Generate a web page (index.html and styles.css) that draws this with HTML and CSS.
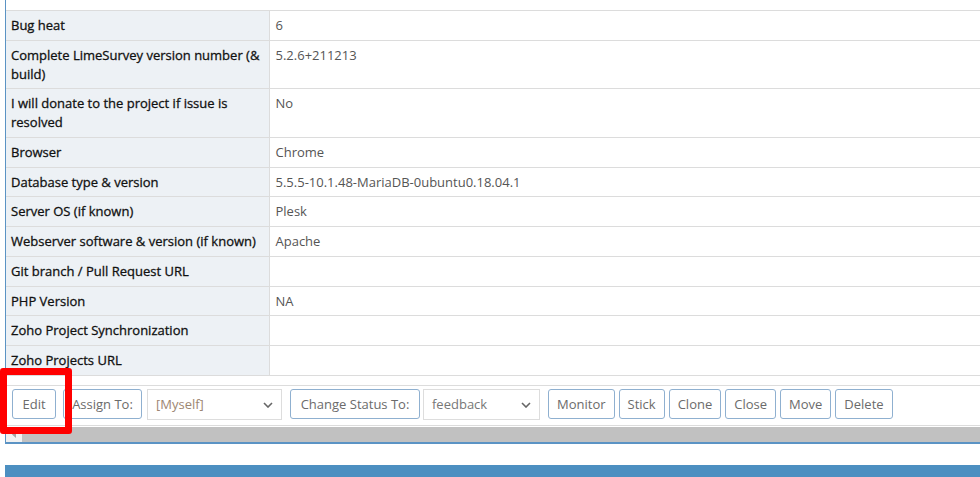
FILE: index.html
```html
<!DOCTYPE html>
<html>
<head>
    <title>Issue details</title>
    <link rel="stylesheet" href="styles.css">
</head>
<body>
    <div class="issue-box">
        <div class="top-gap"></div>
        <table class="details">
            <colgroup><col class="label-col"><col></colgroup>
            <tr><th>Bug heat</th><td>6</td></tr>
            <tr><th>Complete LimeSurvey version number (&amp; build)</th><td>5.2.6+211213</td></tr>
            <tr><th>I will donate to the project if issue is resolved</th><td>No</td></tr>
            <tr><th>Browser</th><td>Chrome</td></tr>
            <tr><th>Database type &amp; version</th><td>5.5.5-10.1.48-MariaDB-0ubuntu0.18.04.1</td></tr>
            <tr><th>Server OS (if known)</th><td>Plesk</td></tr>
            <tr><th>Webserver software &amp; version (if known)</th><td>Apache</td></tr>
            <tr><th>Git branch / Pull Request URL</th><td></td></tr>
            <tr><th>PHP Version</th><td>NA</td></tr>
            <tr><th>Zoho Project Synchronization</th><td></td></tr>
            <tr><th>Zoho Projects URL</th><td></td></tr>
        </table>
        <div class="spacer-row"></div>
        <div class="actions">
            <button class="btn edit-btn">Edit</button>
            <button class="btn assign-btn">Assign To:</button>
            <div class="fake-select myself">[Myself]<svg width="10" height="6" viewBox="0 0 10 6"><path d="M1 1l4 4 4-4" fill="none" stroke="#666" stroke-width="1.6"/></svg></div>
            <button class="btn status-btn">Change Status To:</button>
            <div class="fake-select status">feedback<svg width="10" height="6" viewBox="0 0 10 6"><path d="M1 1l4 4 4-4" fill="none" stroke="#666" stroke-width="1.6"/></svg></div>
            <button class="btn">Monitor</button>
            <button class="btn">Stick</button>
            <button class="btn">Clone</button>
            <button class="btn">Close</button>
            <button class="btn">Move</button>
            <button class="btn">Delete</button>
        </div>
        <div class="hscroll">
            <div class="hscroll-arrow"><svg width="5" height="7" viewBox="0 0 5 7"><path d="M4 0v7L0 3.5z" fill="#a3a3a3"/></svg></div>
            <div class="hscroll-thumb"></div>
        </div>
        <div class="highlight"></div>
    </div>

    <div class="section-bar">Issue History</div>
</body>
</html>
```

FILE: styles.css
```css
body {
    font-family: "Open Sans", "Liberation Sans", sans-serif;
    font-size: 13px;
    margin: 0;
    padding: 0;
    background-color: white;
    overflow: hidden;
}
.issue-box {
    position: relative;
    margin-left: 5px;
    border-left: 1px solid #5b93c4;
    border-bottom: 2px solid #5b93c4;
}
.top-gap {
    height: 10px;
    border-bottom: 1px solid #dcdcdc;
}
.details {
    width: 100%;
    border-collapse: collapse;
    table-layout: fixed;
}
.label-col {
    width: 263px;
}
.details th,
.details td {
    text-align: left;
    vertical-align: top;
    line-height: 18.75px;
    padding: 5px 4px 5px 5px;
    border-bottom: 1px solid #dcdcdc;
}
.details th {
    font-weight: normal;
    color: #111;
    -webkit-text-stroke: 0.3px #111;
    background-color: #edf1f5;
    border-right: 1px solid #dcdcdc;
}
.details td {
    font-weight: normal;
    color: #555;
    padding-left: 6px;
}
.spacer-row {
    height: 9px;
    border-bottom: 1px solid #dcdcdc;
}
.actions {
    display: flex;
    align-items: center;
    padding: 3px 0 5px 6px;
    border-bottom: 1px solid #dcdcdc;
}
.btn {
    font-family: "Open Sans", "Liberation Sans", sans-serif;
    font-size: 13px;
    color: #6b6b6b;
    background-color: white;
    border: 1px solid #8fb0d0;
    border-radius: 3px;
    height: 30px;
    padding: 0 8px;
    margin-right: 4px;
    cursor: pointer;
}
.edit-btn {
    width: 44px;
    margin-right: 7px;
}
.assign-btn {
    width: 79px;
}
.status-btn {
    width: 130px;
    margin-right: 3px;
}
.fake-select {
    display: flex;
    align-items: center;
    justify-content: space-between;
    box-sizing: border-box;
    height: 31px;
    padding: 0 8px 0 8px;
    border: 1px solid #dddddd;
    color: #777;
    margin-right: 8px;
}
.fake-select svg {
    margin-top: 2px;
}
.myself {
    width: 135px;
    color: #9d8672;
    margin-left: 1px;
}
.status {
    width: 117px;
}
.hscroll {
    display: flex;
    height: 15px;
    margin-top: 1px;
    background-color: #f1f1f1;
}
.hscroll-arrow {
    width: 16px;
    display: flex;
    align-items: center;
    justify-content: center;
}
.hscroll-thumb {
    flex: 1;
    background-color: #c1c1c1;
}
.highlight {
    position: absolute;
    left: -6px;
    top: 368px;
    width: 58px;
    height: 52px;
    border: 7px solid #ff0000;
    border-radius: 3px;
}
.section-bar {
    margin: 21px 0 0 5px;
    padding: 7px 18px;
    height: 30px;
    background-color: #4c8fc1;
    color: white;
    font-weight: 600;
    font-size: 15px;
}
```
